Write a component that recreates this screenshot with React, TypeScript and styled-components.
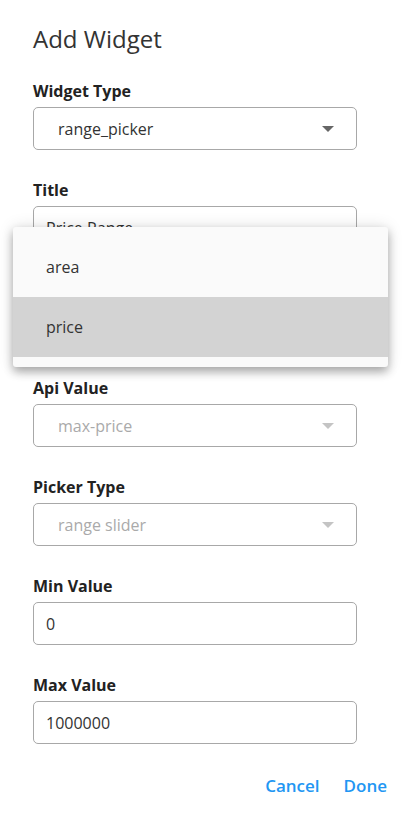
import React from 'react';
import styled, { createGlobalStyle } from 'styled-components';

const GlobalStyle = createGlobalStyle`
    html, body {
        margin: 0;
        padding: 0;
        background: #fff;
    }
    body {
        font-family: "Open Sans", "Noto Sans", sans-serif;
        color: #222;
    }
`;

type FieldDef = {
    label: string;
    value: string;
    kind: 'select' | 'input';
    disabled?: boolean;
};

// the third field sits under the open menu, so it shows no value
const fields: FieldDef[] = [
    { label: 'Widget Type', value: 'range_picker', kind: 'select' },
    { label: 'Title', value: 'Price Range', kind: 'input' },
    { label: 'Field', value: '', kind: 'select' },
    { label: 'Api Value', value: 'max-price', kind: 'select', disabled: true },
    { label: 'Picker Type', value: 'range slider', kind: 'select', disabled: true },
    { label: 'Min Value', value: '0', kind: 'input' },
    { label: 'Max Value', value: '1000000', kind: 'input' },
];

const menuItems = ['area', 'price'];

const App: React.FC = () => {
    return (
        <Dialog>
            <GlobalStyle />
            <Heading>Add Widget</Heading>
            <Form>
                {fields.map((f) => (
                    <Field key={f.label}>
                        <Label>{f.label}</Label>
                        <Box $select={f.kind === 'select'}>
                            <Value $disabled={f.disabled}>{f.value}</Value>
                            {f.kind === 'select' && <Caret $disabled={f.disabled} />}
                        </Box>
                    </Field>
                ))}
            </Form>
            <Actions>
                <ActionButton>Cancel</ActionButton>
                <ActionButton>Done</ActionButton>
            </Actions>

            <Menu>
                {menuItems.map((m) => (
                    <MenuItem key={m} $active={m === 'price'}>
                        {m}
                    </MenuItem>
                ))}
            </Menu>
        </Dialog>
    );
};

const Dialog = styled.div`
    position: relative;
    width: 402px;
    height: 825px;
    box-sizing: border-box;
    padding: 20px 15px 0 33px;
    background: #fff;
`;

const Heading = styled.h2`
    margin: 0 0 21px;
    font-size: 24px;
    font-weight: 400;
    line-height: 38px;
    color: #333;
`;

const Form = styled.div`
    display: flex;
    flex-direction: column;
    gap: 28px;
    width: 324px;
`;

const Field = styled.div`
    display: flex;
    flex-direction: column;
    gap: 4px;
`;

const Label = styled.label`
    font-size: 16px;
    font-weight: 700;
    line-height: 24px;
    color: #222;
`;

const Box = styled.div<{ $select?: boolean }>`
    height: 43px;
    box-sizing: border-box;
    border: 1px solid #a8a8a8;
    border-radius: 5px;
    display: flex;
    align-items: center;
    justify-content: space-between;
    padding: 0 22px 0 ${(p) => (p.$select ? '24px' : '12px')};
    background: #fff;
`;

const Value = styled.span<{ $disabled?: boolean }>`
    font-size: 16px;
    color: ${(p) => (p.$disabled ? '#aaa' : '#333')};
`;

const Caret = styled.span<{ $disabled?: boolean }>`
    width: 0;
    height: 0;
    border-left: 6px solid transparent;
    border-right: 6px solid transparent;
    border-top: 6px solid ${(p) => (p.$disabled ? '#c4c4c4' : '#666')};
`;

const Actions = styled.div`
    display: flex;
    justify-content: flex-end;
    gap: 24px;
    margin-top: 30px;
`;

const ActionButton = styled.button`
    border: none;
    background: none;
    padding: 0;
    font-family: "Open Sans", "Noto Sans", sans-serif;
    font-size: 17px;
    font-weight: 600;
    line-height: 24px;
    color: #2196f3;
    cursor: pointer;
`;

const Menu = styled.div`
    position: absolute;
    top: 227px;
    left: 13px;
    width: 375px;
    padding: 10px 0;
    background: #fafafa;
    border-radius: 3px;
    box-shadow: 0 5px 10px rgba(0, 0, 0, 0.3), 0 0 16px rgba(0, 0, 0, 0.12);
`;

const MenuItem = styled.div<{ $active?: boolean }>`
    height: 60px;
    display: flex;
    align-items: center;
    padding-left: 33px;
    font-size: 16px;
    color: #333;
    background: ${(p) => (p.$active ? '#d3d3d3' : 'transparent')};
`;

export default App;
